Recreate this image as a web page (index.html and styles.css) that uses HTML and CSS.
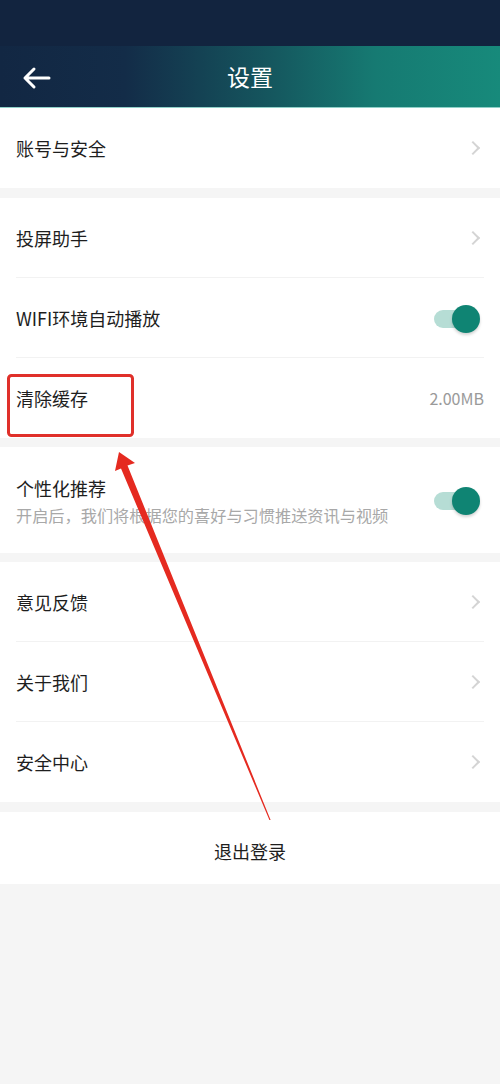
FILE: index.html
```html
<!DOCTYPE html>
<html lang="zh">
<head>
<meta charset="utf-8">
<link rel="stylesheet" href="styles.css">
</head>
<body>
<div class="page">
  <div class="statusbar"></div>
  <header class="header">
    <svg class="back" width="30" height="24" viewBox="0 0 30 24"><path d="M28 12H4M13 3L4 12l9 9" fill="none" stroke="#fff" stroke-width="3" stroke-linecap="round" stroke-linejoin="round"/></svg>
    <div class="title">设置</div>
  </header>

  <section class="group">
    <div class="row"><span class="label">账号与安全</span><span class="chev"></span></div>
  </section>

  <section class="group">
    <div class="row line"><span class="label">投屏助手</span><span class="chev"></span></div>
    <div class="row line"><span class="label">WIFI环境自动播放</span><span class="toggle"><span class="knob"></span></span></div>
    <div class="row"><span class="label">清除缓存</span><span class="value">2.00MB</span></div>
  </section>

  <section class="group">
    <div class="row tall">
      <div class="texts">
        <span class="label">个性化推荐</span>
        <span class="sub">开启后，我们将根据您的喜好与习惯推送资讯与视频</span>
      </div>
      <span class="toggle"><span class="knob"></span></span>
    </div>
  </section>

  <section class="group">
    <div class="row line"><span class="label">意见反馈</span><span class="chev"></span></div>
    <div class="row line"><span class="label">关于我们</span><span class="chev"></span></div>
    <div class="row"><span class="label">安全中心</span><span class="chev"></span></div>
  </section>

  <section class="group logout">退出登录</section>

  <svg class="annot" width="500" height="1084" viewBox="0 0 500 1084">
    <rect x="8.5" y="375.5" width="124" height="60" rx="3" fill="none" stroke="#e0302a" stroke-width="3"/>
    <polygon points="119,452 135,463 127.5,465.5 270.6,820 269.4,820 121,468.5 115,471" fill="#e52a20"/>
  </svg>
</div>
</body>
</html>
```
FILE: styles.css
```css
html, body { margin: 0; padding: 0; }
body {
  background: #f5f5f5;
  font-family: "Noto Sans CJK SC", "Noto Sans", sans-serif;
  color: #1e1e1e;
}
.page { position: relative; width: 500px; height: 1084px; overflow: hidden; }
.statusbar { height: 46px; background: #12243f; }
.header {
  height: 61px;
  border-bottom: 1px solid #8fd0c8;
  background: linear-gradient(90deg, #122743 0%, #132c48 25%, #15585f 55%, #167a72 75%, #178a7b 100%);
  display: flex;
  align-items: center;
  justify-content: center;
  position: relative;
}
.back { position: absolute; left: 21px; top: 20px; }
.title { color: #fff; font-size: 23px; line-height: 1; }

.group { background: #fff; margin-bottom: 10px; }
.group:nth-of-type(2), .group:nth-of-type(3) { margin-bottom: 9px; }
.row {
  height: 80px;
  margin: 0 16px;
  display: flex;
  align-items: center;
  justify-content: space-between;
  box-sizing: border-box;
}
.row.line { border-bottom: 1px solid #f2f2f2; }
.row.tall { height: 106px; }
.label { font-size: 18px; line-height: 1; }
.texts { display: flex; flex-direction: column; gap: 10px; padding-top: 2px; }
.sub { font-size: 16.2px; color: #a8a8a8; line-height: 1; }
.value { font-size: 16px; color: #9a9a9a; }
.chev {
  width: 8px; height: 8px;
  border-top: 2px solid #d4d4d4;
  border-right: 2px solid #d4d4d4;
  transform: rotate(45deg);
  margin-right: 6px;
}
.toggle {
  position: relative;
  width: 40px; height: 18px;
  border-radius: 9px;
  background: #b6ddd5;
  margin-right: 10px;
  margin-top: 2px;
}
.knob {
  position: absolute;
  right: -6px; top: -5px;
  width: 28px; height: 28px;
  border-radius: 50%;
  background: #0f8473;
  box-shadow: 0 2px 3px rgba(0,0,0,0.18);
}
.logout {
  height: 72px;
  display: flex;
  align-items: center;
  justify-content: center;
  font-size: 18px;
  padding-top: 6px;
  box-sizing: border-box;
}
.annot { position: absolute; left: 0; top: 0; pointer-events: none; }
```
